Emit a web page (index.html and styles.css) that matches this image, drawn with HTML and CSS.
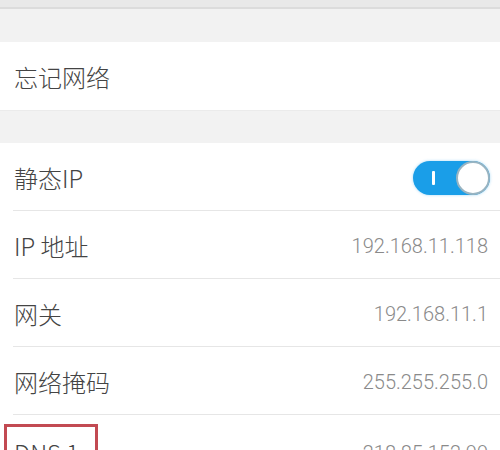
FILE: index.html
```html
<!DOCTYPE html>
<html lang="zh">
<head>
<meta charset="utf-8">
<link rel="stylesheet" href="styles.css">
</head>
<body>
<div class="page">
  <div class="topbar"></div>
  <div class="gap first"></div>
  <div class="group">
    <div class="row"><span class="label">忘记网络</span></div>
  </div>
  <div class="gap"></div>
  <div class="group">
    <div class="row sep">
      <span class="label">静态IP</span>
      <span class="toggle"><span class="bar"></span><span class="knob"></span></span>
    </div>
    <div class="row sep"><span class="label">IP 地址</span><span class="value">192.168.11.118</span></div>
    <div class="row sep"><span class="label">网关</span><span class="value">192.168.11.1</span></div>
    <div class="row sep"><span class="label">网络掩码</span><span class="value">255.255.255.0</span></div>
    <div class="row last"><span class="label boxed">DNS 1</span><span class="value">218.85.152.99</span></div>
  </div>
</div>
</body>
</html>
```

FILE: styles.css
```css
* { box-sizing: border-box; }
html, body { margin: 0; padding: 0; background: #f2f2f2; }
body { font-family: "Noto Sans CJK SC", "Noto Sans", sans-serif; overflow: hidden; width: 500px; height: 450px; }
.page { width: 500px; }
.topbar { height: 9px; background: #e9e9e9; border-bottom: 2px solid #dcdcdc; }
.gap { height: 33px; background: #f2f2f2; border-top: 1px solid #ebebeb; }
.gap.first { height: 33px; border-top: none; }
.group { background: #ffffff; }
.row {
  height: 68px;
  display: flex;
  align-items: center;
  justify-content: space-between;
  padding: 0 12px 0 14px;
  position: relative;
}
.row.sep::after {
  content: "";
  position: absolute;
  left: 13px; right: 0; bottom: 0;
  height: 1px;
  background: #e6e6e6;
}
.label { font-size: 24px; color: #444444; line-height: 1; font-weight: 300; position: relative; top: 1px; }
.value { font-family: "Roboto", "Noto Sans", sans-serif; font-weight: 300; font-size: 20px; color: #8a8a8a; line-height: 1; position: relative; top: 1px; }
.row.last .label, .row.last .value { top: 4px; }
.toggle {
  width: 77px; height: 34px;
  border-radius: 17px;
  background: #1a9ee8;
  position: relative;
  margin-right: -2px;
  top: 1px;
  box-shadow: 0 0 3px rgba(26,158,232,0.4);
}
.toggle .bar { position: absolute; left: 19px; top: 10px; width: 3px; height: 14px; background: #fff; border-radius: 1px; }
.toggle .knob {
  position: absolute; right: 0; top: 0;
  width: 34px; height: 34px; border-radius: 50%;
  background: #fff; border: 2px solid #98b4c2;
}
.boxed::before {
  content: "";
  position: absolute;
  left: -10px; top: -17px; width: 88px; height: 52px;
  border: 3px solid #c24a52;
}
```
